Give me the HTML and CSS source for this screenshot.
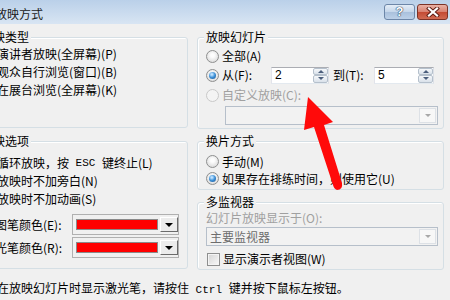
FILE: index.html
```html
<!DOCTYPE html>
<html lang="zh-CN">
<head>
  <meta charset="UTF-8" />
  <title>放映方式</title>
  <link rel="stylesheet" href="styles.css">
</head>
<body>
  <div class="dialog">
    <div class="titlebar">
      <span class="title">放映方式</span>
      <span class="cap-btn help">?</span>
      <span class="cap-btn close">
        <svg width="14" height="10" viewBox="0 0 14 10">
          <path d="M3 1.5 L11 8.5 M11 1.5 L3 8.5" stroke="#5a1a12" stroke-width="4" stroke-linecap="square"/>
          <path d="M3 1.5 L11 8.5 M11 1.5 L3 8.5" stroke="#fff" stroke-width="2.2" stroke-linecap="square"/>
        </svg>
      </span>
    </div>

    <div class="client">
      <div class="col col-left">
        <div class="group g-type">
          <span class="legend">放映类型</span>
          <div class="row"><i class="radio on"></i>演讲者放映(全屏幕)(P)</div>
          <div class="row"><i class="radio"></i>观众自行浏览(窗口)(B)</div>
          <div class="row"><i class="radio"></i>在展台浏览(全屏幕)(K)</div>
        </div>

        <div class="group g-opts">
          <span class="legend">放映选项</span>
          <div class="row first"><i class="check"></i>循环放映，按<span class="mono"> ESC </span>键终止(L)</div>
          <div class="row"><i class="check"></i>放映时不加旁白(N)</div>
          <div class="row"><i class="check"></i>放映时不加动画(S)</div>
          <div class="color-row first">
            <span class="color-label">绘图笔颜色(E):</span>
            <span class="picker"><span class="swatch"></span><span class="picker-btn"></span></span>
          </div>
          <div class="color-row">
            <span class="color-label">激光笔颜色(R):</span>
            <span class="picker"><span class="swatch"></span><span class="picker-btn"></span></span>
          </div>
        </div>
      </div>

      <div class="col col-right">
        <div class="group g-slides">
          <span class="legend">放映幻灯片</span>
          <div class="row r-all"><i class="radio"></i>全部(A)</div>
          <div class="row r-from">
            <i class="radio on"></i>
            <span class="lbl-from">从(F):</span>
            <span class="spin w-from"><span class="spin-val">2</span><span class="spin-btns"><i class="up"></i><i class="down"></i></span></span>
            <span class="lbl-to">到(T):</span>
            <span class="spin w-to"><span class="spin-val">5</span><span class="spin-btns"><i class="up"></i><i class="down"></i></span></span>
          </div>
          <div class="row r-custom disabled"><i class="radio off"></i>自定义放映(C):</div>
          <div class="combo c-custom"><span class="combo-text"></span><span class="combo-btn"></span></div>
        </div>

        <div class="group g-advance">
          <span class="legend">换片方式</span>
          <div class="row short first"><i class="radio"></i>手动(M)</div>
          <div class="row short"><i class="radio on"></i>如果存在排练时间，则使用它(U)</div>
        </div>

        <div class="group g-monitor">
          <span class="legend">多监视器</span>
          <div class="mon-label disabled">幻灯片放映显示于(O):</div>
          <div class="combo c-monitor"><span class="combo-text">主要监视器</span><span class="combo-btn"></span></div>
          <div class="row r-presenter"><i class="check"></i>显示演示者视图(W)</div>
        </div>
      </div>
    </div>

    <p class="hint">在放映幻灯片时显示激光笔，请按住<span class="mono"> Ctrl </span>键并按下鼠标左按钮。</p>

    <div class="buttons">
      <button class="btn default">确定</button>
      <button class="btn cancel">取消</button>
    </div>

    <svg class="arrow" width="450" height="300" viewBox="0 0 450 300">
      <path d="M308 97 L333 122 L324 125 L342 183 Q343 190 337 190 Q334 189 333 185 L314 127 L304 130 Z" fill="#ff0a0a"/>
    </svg>
  </div>
</body>
</html>
```

FILE: styles.css
```css
html, body { margin: 0; padding: 0; background: #f0f0f0; }
body { font-family: "Noto Sans CJK SC", sans-serif; font-size: 12px; color: #000; }

.dialog { width: 450px; height: 300px; overflow: hidden; position: relative; }

/* title bar */
.titlebar { height: 24px; display: flex; align-items: flex-start; background: linear-gradient(#bad0e9, #d8e5f3); }
.title { margin: 6px 0 0 -5px; line-height: 16px; color: #1b1b1b; }
.cap-btn { height: 16px; margin-top: 4px; box-sizing: border-box; border: 1px solid; border-radius: 3px; display: flex; align-items: center; justify-content: center; }
.help { width: 31px; margin-left: auto; border-color: #6c86a8; background: linear-gradient(#e4edf7, #c4d5ea 50%, #a9c0dc 51%, #bcd0e8);
  font-family: "Liberation Sans", sans-serif; font-weight: bold; font-size: 13px; line-height: 14px; color: #fff;
  text-shadow: 0 0 1px #23405f, 0 0 1px #23405f, 0 0 1px #23405f; }
.close { width: 31px; margin: 4px 2px 0 2px; border-color: #7c3226; background: linear-gradient(#e9b1a5, #d8806f 50%, #c44a33 51%, #d06a52); }

/* body */
.client { display: flex; align-items: flex-start; gap: 9px; padding-top: 13px; }
.col { display: flex; flex-direction: column; flex: none; }
.col-left { width: 216px; margin-left: -28px; }
.col-right { width: 247px; }

.group { border: 1px solid #d5dfe5; border-radius: 3px; box-shadow: inset 1px 1px 0 #fff; box-sizing: border-box; display: flex; flex-direction: column; }
.legend { align-self: flex-start; margin: -9px 0 0 6px; padding: 0 2px; height: 16px; line-height: 16px; background: #f0f0f0; }

.row { display: flex; align-items: center; height: 18px; line-height: 18px; white-space: nowrap; }
.row.short { height: 17px; line-height: 17px; }
.disabled { color: #a0a0a0; }
.mono { font-family: "Liberation Mono", monospace; font-size: 11px; white-space: pre; }

.radio { flex: none; width: 13px; height: 13px; margin: 0 3px 0 8px; box-sizing: border-box; border: 1px solid #8e8f8f; border-radius: 50%;
  background: radial-gradient(circle at 50% 40%, #fdfdfd 20%, #d6d6d6 90%); display: flex; align-items: center; justify-content: center; }
.radio.on::after { content: ""; width: 7px; height: 7px; border-radius: 50%; background: radial-gradient(circle at 40% 35%, #bfe2ff 10%, #3b8fd6 50%, #1b4f8c 100%); }
.radio.off { border-color: #c9c9c9; background: #f4f4f4; }
.check { flex: none; width: 13px; height: 13px; margin: 0 3px 0 8px; box-sizing: border-box; border: 1px solid #8e8f8f;
  background: linear-gradient(135deg, #d4d4d4, #f9f9f9); box-shadow: inset 0 0 0 1px #f4f4f4; }

/* left groups */
.g-type { height: 91px; }
.g-opts { height: 128px; margin-top: 13px; }
.g-opts .row.first { margin-top: 5px; }
.color-row { display: flex; align-items: center; height: 21px; margin-top: 2px; padding-left: 10px; }
.color-row.first { margin-top: 6px; }
.color-label { flex: none; width: 89px; white-space: nowrap; }
.picker { flex: none; width: 107px; height: 21px; box-sizing: border-box; border: 1px solid #b0b0b0; display: flex; align-items: center; padding-left: 3px; }
.swatch { width: 82px; height: 11px; box-sizing: border-box; border: 1px solid #8a8a8a; background: #ff0000; margin-right: 2px; }
.picker-btn { width: 18px; height: 15px; box-sizing: border-box; border: 1px solid; border-color: #fff #6b6b6b #6b6b6b #fff; background: #ececec;
  display: flex; align-items: center; justify-content: center; }
.picker-btn::after { content: ""; border-left: 4px solid transparent; border-right: 4px solid transparent; border-top: 4px solid #000; margin-top: 1px; }

/* right groups */
.g-slides { height: 92px; }
.r-all { margin-top: 2px; }
.r-from { margin-top: 1px; }
.lbl-from { width: 49px; flex: none; }
.lbl-to { width: 41px; flex: none; margin-left: 4px; }
.spin { flex: none; height: 17px; box-sizing: border-box; border: 1px solid; border-color: #abadb3 #dbdfe6 #e3e9ef #e2e3ea; background: #fff;
  display: flex; align-items: center; }
.w-from { width: 58px; }
.w-to { width: 60px; }
.spin-val { flex: 1; padding-left: 3px; font-family: "Liberation Sans", sans-serif; font-size: 12px; line-height: 15px; }
.spin-btns { width: 15px; height: 15px; display: flex; flex-direction: column; }
.spin-btns i { flex: 1; box-sizing: border-box; border: 1px solid #b5c0cc; border-radius: 2px; background: linear-gradient(#f6f8fa, #d9e1ea);
  display: flex; align-items: center; justify-content: center; }
.spin-btns .up::after { content: ""; border-left: 3px solid transparent; border-right: 3px solid transparent; border-bottom: 3px solid #4b5e7c; }
.spin-btns .down::after { content: ""; border-left: 3px solid transparent; border-right: 3px solid transparent; border-top: 3px solid #4b5e7c; }
.r-custom { margin-top: 2px; }

.combo { height: 19px; box-sizing: border-box; border: 1px solid #b6bfca; background: #f2f2f2; display: flex; }
.combo-text { flex: 1; padding-left: 3px; line-height: 17px; color: #6d6d6d; white-space: nowrap; }
.combo-btn { width: 17px; margin: 1px; box-sizing: border-box; border: 1px solid #dde1e6; background: #f7f7f7; display: flex; align-items: center; justify-content: center; }
.combo-btn::after { content: ""; border-left: 3px solid transparent; border-right: 3px solid transparent; border-top: 3px solid #a8a8a8; }
.c-custom { width: 213px; margin: 2px 0 0 27px; }

.g-advance { height: 49px; margin-top: 12px; }
.g-advance .row.first { margin-top: 4px; }

.g-monitor { height: 68px; margin-top: 12px; }
.mon-label { margin-left: 8px; line-height: 16px; height: 16px; }
.c-monitor { width: 232px; margin: 1px 0 0 8px; }
.r-presenter { height: 16px; margin-top: 5px; }
.r-presenter .check { margin-left: 9px; }

/* bottom */
.hint { margin: 10px 0 0 -3px; line-height: 16px; white-space: nowrap; }
.buttons { display: flex; justify-content: flex-end; gap: 14px; padding-right: 6px; margin-top: 2px; }
.btn { height: 23px; box-sizing: border-box; border: 1px solid #707070; border-radius: 3px; background: linear-gradient(#f2f2f2, #dddddd);
  font-family: "Noto Sans CJK SC", sans-serif; font-size: 12px; }
.btn.default { width: 70px; border-color: #3c7fb1; }
.btn.cancel { width: 71px; }

.arrow { position: absolute; left: 0; top: 0; pointer-events: none; }
```
